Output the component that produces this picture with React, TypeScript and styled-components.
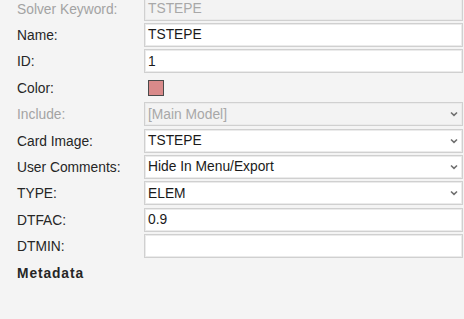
import React from 'react';
import styled, { createGlobalStyle } from 'styled-components';

const GlobalStyle = createGlobalStyle`
  html, body {
    margin: 0;
    padding: 0;
    background-color: #f4f4f4;
    overflow: hidden;
  }
`;

const Panel = styled.div`
  width: 464px;
  height: 330px;
  margin-top: -4.6px;
  background-color: #f4f4f4;
  font-family: "Liberation Sans", Arial, sans-serif;
  font-size: 13.8px;
  display: grid;
  grid-template-columns: 144px 319px;
  grid-auto-rows: 26.4px;
  align-content: start;
`;

const Label = styled.div<{ $disabled?: boolean; $bold?: boolean }>`
  padding-left: 17px;
  padding-top: 1px;
  display: flex;
  align-items: center;
  color: ${(p) => (p.$disabled ? '#a3a3a3' : '#262626')};
  font-weight: ${(p) => (p.$bold ? 'bold' : 'normal')};
  letter-spacing: ${(p) => (p.$bold ? '0.9px' : '0')};
  white-space: nowrap;
`;

const Cell = styled.div`
  display: flex;
  align-items: center;
`;

const Field = styled.div<{ $disabled?: boolean }>`
  box-sizing: border-box;
  width: 100%;
  height: 24px;
  padding: 0 4px 0 3px;
  display: flex;
  align-items: center;
  justify-content: space-between;
  background-color: ${(p) => (p.$disabled ? '#f3f3f3' : '#ffffff')};
  border: 1px solid #d0d0d0;
  box-shadow: inset 0 0 0 1px #ebebeb;
  color: ${(p) => (p.$disabled ? '#a8a8a8' : '#1a1a1a')};
`;

const Swatch = styled.div<{ $color: string }>`
  width: 14px;
  height: 14px;
  margin-left: 4px;
  background-color: ${(p) => p.$color};
  border: 1px solid #4a4a4a;
`;

const Chevron = () => (
  <svg width="8" height="6" viewBox="0 0 8 6">
    <path d="M1 1.5 L4 4.3 L7 1.5" fill="none" stroke="#707070" strokeWidth="1.6" />
  </svg>
);

type Row =
  | { label: string; kind: 'text'; value: string; disabled?: boolean }
  | { label: string; kind: 'select'; value: string; disabled?: boolean }
  | { label: string; kind: 'color'; value: string };

const rows: Row[] = [
  { label: 'Solver Keyword:', kind: 'text', value: 'TSTEPE', disabled: true },
  { label: 'Name:', kind: 'text', value: 'TSTEPE' },
  { label: 'ID:', kind: 'text', value: '1' },
  { label: 'Color:', kind: 'color', value: '#d98a8a' },
  { label: 'Include:', kind: 'select', value: '[Main Model]', disabled: true },
  { label: 'Card Image:', kind: 'select', value: 'TSTEPE' },
  { label: 'User Comments:', kind: 'select', value: 'Hide In Menu/Export' },
  { label: 'TYPE:', kind: 'select', value: 'ELEM' },
  { label: 'DTFAC:', kind: 'text', value: '0.9' },
  { label: 'DTMIN:', kind: 'text', value: '' },
];

const App: React.FC = () => {
  return (
    <>
      <GlobalStyle />
      <Panel>
        {rows.map((row) => {
          const disabled = row.kind !== 'color' && row.disabled;
          return (
            <React.Fragment key={row.label}>
              <Label $disabled={disabled}>{row.label}</Label>
              <Cell>
                {row.kind === 'color' && <Swatch $color={row.value} />}
                {row.kind === 'text' && <Field $disabled={disabled}>{row.value}</Field>}
                {row.kind === 'select' && (
                  <Field $disabled={disabled}>
                    <span>{row.value}</span>
                    <Chevron />
                  </Field>
                )}
              </Cell>
            </React.Fragment>
          );
        })}
        <Label $bold>Metadata</Label>
      </Panel>
    </>
  );
};

export default App;
